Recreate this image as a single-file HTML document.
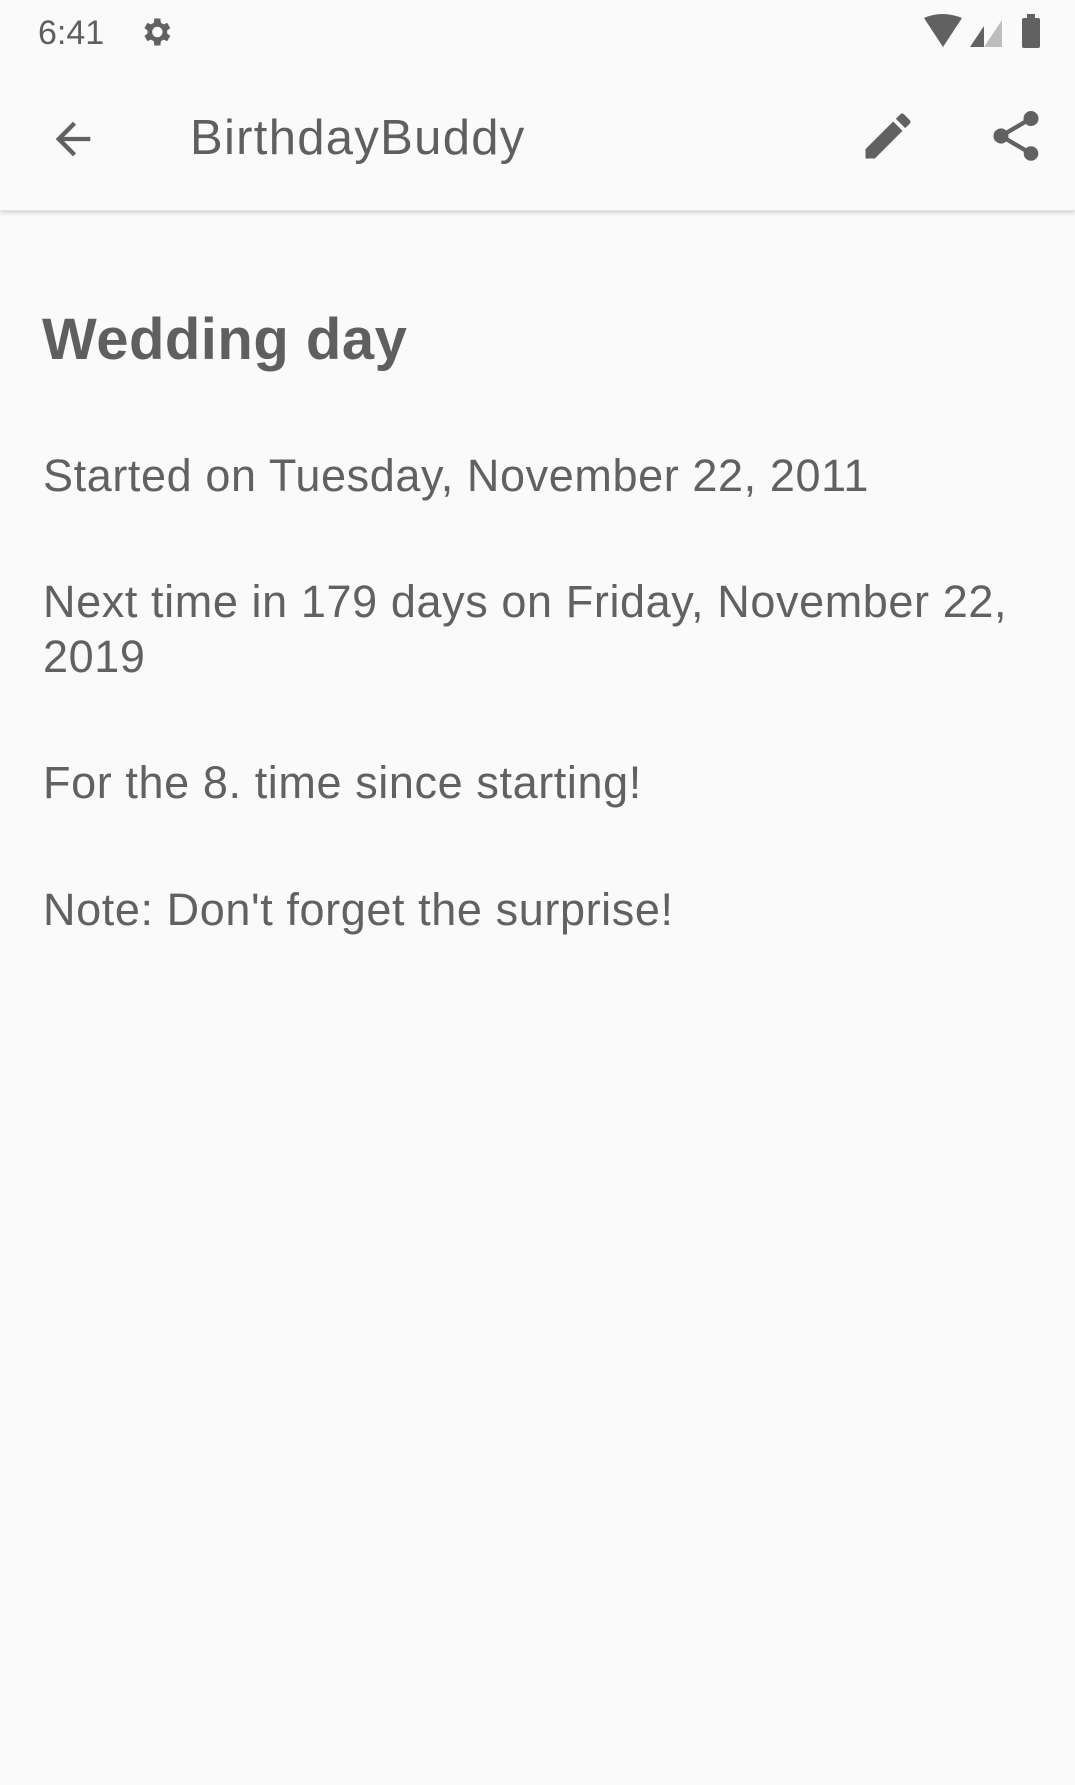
<!DOCTYPE html>
<html><head><meta charset="utf-8"><style>
html,body{margin:0;padding:0}
body{width:1075px;height:1785px;background:#fafafa;font-family:"Liberation Sans",sans-serif;color:#616161;position:relative;overflow:hidden}
.abs{position:absolute}
.bar{position:absolute;left:0;top:0;width:1075px;height:210px;background:#fafafa;box-shadow:0 2px 4px rgba(0,0,0,0.15);border-bottom:1px solid #e4e4e4}
.t{position:absolute;left:43px;font-size:45px;line-height:55px;width:1010px;white-space:normal;letter-spacing:0.6px}
</style></head><body>
<div class="bar"></div>
<div class="abs" style="left:38px;top:14px;font-size:34px;color:#5f5f5f">6:41</div>
<svg class="abs" style="left:138px;top:14px" width="36" height="36" viewBox="0 0 24 24"><path fill="#616161" d="M19.4 13a7.5 7.5 0 0 0 0-2l2.1-1.6-2-3.5-2.5 1a7 7 0 0 0-1.7-1L14.9 3h-4l-.4 2.9a7 7 0 0 0-1.7 1l-2.5-1-2 3.5L6.4 11a7.5 7.5 0 0 0 0 2l-2.1 1.6 2 3.5 2.5-1a7 7 0 0 0 1.7 1l.4 2.9h4l.4-2.9a7 7 0 0 0 1.7-1l2.5 1 2-3.5zM12.9 15.5a3.5 3.5 0 1 1 0-7 3.5 3.5 0 0 1 0 7z"/></svg>
<svg class="abs" style="left:922px;top:14px" width="120" height="36" viewBox="0 0 120 36"><path fill="#616161" d="M2 4 Q20 -4 40 4 L21 33Z"/><path fill="#bdbdbd" d="M62 33 L80 6 L80 33Z"/><path fill="#616161" d="M48 33 L62 12 L62 33Z"/><rect x="100" y="4" width="18" height="30" rx="2" fill="#616161"/><rect x="105" y="0" width="8" height="5" fill="#616161"/></svg>
<svg class="abs" style="left:47px;top:113px" width="52" height="52" viewBox="0 0 24 24"><path fill="#616161" d="M20 11H7.83l5.59-5.59L12 4l-8 8 8 8 1.41-1.41L7.83 13H20v-2z"/></svg>
<div class="abs" style="left:190px;top:110px;font-size:49px;color:#5f5f5f;letter-spacing:1.3px">BirthdayBuddy</div>
<svg class="abs" style="left:858px;top:106px" width="60" height="60" viewBox="0 0 24 24"><path fill="#616161" d="M3 17.25V21h3.75L17.81 9.94l-3.75-3.75L3 17.25zM20.71 7.04a1 1 0 0 0 0-1.41l-2.34-2.34a1 1 0 0 0-1.41 0l-1.83 1.83 3.75 3.75 1.83-1.83z"/></svg>
<svg class="abs" style="left:986px;top:106px" width="60" height="60" viewBox="0 0 24 24"><path fill="#616161" d="M18 16.08c-.76 0-1.44.3-1.96.77L8.91 12.7c.05-.23.09-.46.09-.7s-.04-.47-.09-.7l7.05-4.11A2.99 2.99 0 0 0 21 5a3 3 0 0 0-6 0c0 .24.04.47.09.7L8.04 9.81A2.99 2.99 0 0 0 3 12a3 3 0 0 0 5.04 2.19l7.12 4.16c-.05.21-.08.43-.08.65A2.92 2.92 0 1 0 18 16.08z"/></svg>
<div class="abs" style="left:42px;top:306px;font-size:58px;font-weight:bold;color:#5f5f5f;letter-spacing:0.5px">Wedding day</div>
<div class="t" style="top:448px">Started on Tuesday, November 22, 2011</div>
<div class="t" style="top:574px">Next time in 179 days on Friday, November 22, 2019</div>
<div class="t" style="top:755px">For the 8. time since starting!</div>
<div class="t" style="top:882px">Note: Don't forget the surprise!</div>
</body></html>
